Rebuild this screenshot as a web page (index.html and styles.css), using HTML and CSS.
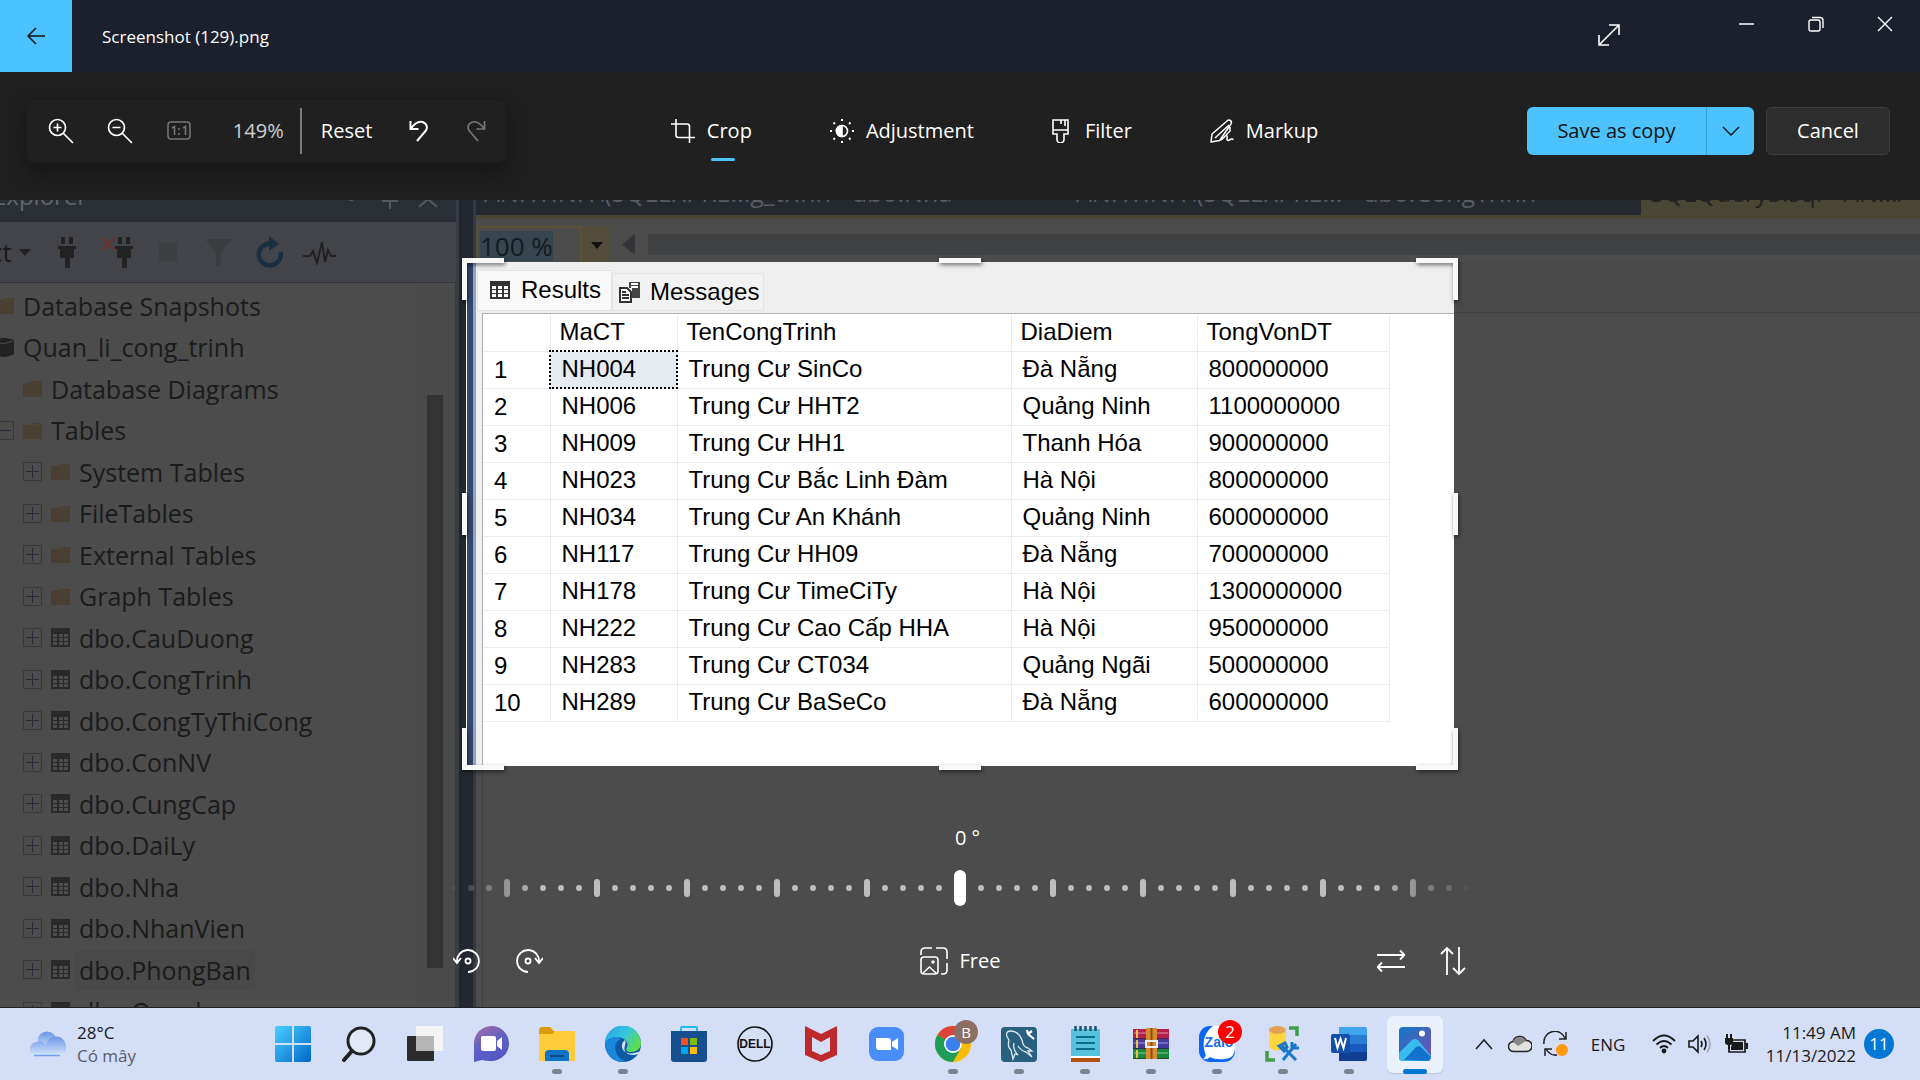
FILE: index.html
```html
<!DOCTYPE html>
<html lang="en">
<head>
<meta charset="utf-8">
<title>Screenshot (129).png</title>
<link rel="stylesheet" href="styles.css">
</head>
<body>
<svg class="defs" aria-hidden="true">
  <symbol id="folder" viewBox="0 0 19 17"><path d="M0 3h6l2-2h11v16H0z" fill="#4a3f33"/><path d="M8 3h10" stroke="#55493c"/></symbol>
  <symbol id="grid" viewBox="0 0 19 19"><path d="M0 0h19v19H0z" fill="#2a2a2a"/><path d="M2 6h4v3H2zM8 6h4v3H8zM13 6h4v3h-4zM2 10h4v3H2zM8 10h4v3H8zM13 10h4v3h-4zM2 14h4v3H2zM8 14h4v3H8zM13 14h4v3h-4z" fill="#4c4c4c"/></symbol>
  <symbol id="plus" viewBox="0 0 19 19"><path d="M.5.5h18v18H.5z" fill="none" stroke="#383838"/><path d="M3 9.500h13M9.500 3v13" stroke="#262b3c"/></symbol>
  <symbol id="minus" viewBox="0 0 19 19"><path d="M.5.5h18v18H.5z" fill="none" stroke="#383838"/><path d="M3 9.500h13" stroke="#262b3c"/></symbol>
  <symbol id="plug" viewBox="0 0 18 31"><path d="M3 0h4v7H3zM11 0h4v7h-4zM0 9h18v3h-2v9h-4v10H7V21H2v-9H0z" fill="#232323"/></symbol>
</svg>

<header class="titlebar">
  <button class="back" aria-label="Back"><svg width="20" height="20" viewBox="0 0 20 20" fill="none" stroke="#111" stroke-width="1.500"><path d="M19 10H2M10 2l-8 8 8 8"/></svg></button>
  <h1 class="title">Screenshot (129).png</h1>
  <button class="expand" aria-label="Full screen"><svg width="24" height="24" viewBox="0 0 24 24" fill="none" stroke="#fff" stroke-width="1.600"><path d="M12 2h10v10M22 2L2 22M2 12v10h10"/></svg></button>
  <div class="caption">
    <button aria-label="Minimize"><svg width="16" height="16" viewBox="0 0 16 16" stroke="#fff"><path d="M0 8h15" stroke-width="1.500"/></svg></button>
    <button aria-label="Restore"><svg width="16" height="16" viewBox="0 0 16 16" fill="none" stroke="#fff" stroke-width="1.400"><rect x="1" y="4" width="11" height="11" rx="2"/><path d="M4 1.500h8a3 3 0 0 1 3 3V12"/></svg></button>
    <button aria-label="Close"><svg width="16" height="16" viewBox="0 0 16 16" stroke="#fff" stroke-width="1.400"><path d="M1 1l14 14M15 1L1 15"/></svg></button>
  </div>
</header>

<div class="toolbar">
  <div class="zoombar">
    <button class="tool" aria-label="Zoom in"><svg width="26" height="26" viewBox="0 0 26 26" fill="none" stroke="#fff" stroke-width="1.700"><circle cx="9.500" cy="9.500" r="8"/><path d="M15 15l10 10M9.500 5.500v8M5.500 9.500h8"/></svg></button>
    <button class="tool" aria-label="Zoom out"><svg width="26" height="26" viewBox="0 0 26 26" fill="none" stroke="#fff" stroke-width="1.700"><circle cx="9.500" cy="9.500" r="8"/><path d="M15 15l10 10M5.500 9.500h8"/></svg></button>
    <button class="tool" aria-label="Actual size" disabled><svg width="24" height="20" viewBox="0 0 24 20" fill="none" stroke="#777" stroke-width="1.500"><rect x="1" y="1" width="22" height="17" rx="3"/><path d="M5 7l2.500-1.500V14M16 7l2.500-1.500V14M12 7v2M12 12v2"/></svg></button>
    <output class="zoomlevel">149%</output>
    <button class="reset">Reset</button>
    <button class="tool narrow" aria-label="Undo"><svg width="20" height="22" viewBox="0 0 20 22" fill="none" stroke="#fff" stroke-width="2"><path d="M1.500 1v8h8M2 8.500C6 3 10 1 13.500 2c4.500 1.300 5.500 6 3 9L8 21"/></svg></button>
    <button class="tool" aria-label="Redo" disabled><svg width="20" height="22" viewBox="0 0 20 22" fill="none" stroke="#777" stroke-width="1.700"><path d="M18.500 1v8h-8M18 8.500C14 3 10 1 6.500 2 2 3.300 1 8 3.500 11L12 21"/></svg></button>
  </div>
  <nav class="modes">
    <button class="mode active"><svg width="24" height="24" viewBox="0 0 24 24" fill="none" stroke="#fff" stroke-width="1.600"><path d="M5 0v16q0 2.500 2.500 2.500H24M0 5h16q2.500 0 2.500 2.500V24"/></svg>Crop</button>
    <button class="mode"><svg width="24" height="24" viewBox="0 0 24 24" fill="none" stroke="#fff" stroke-width="1.700"><circle cx="12" cy="12" r="5.500"/><path d="M12 6.500a5.500 5.500 0 0 0 0 11z" fill="#fff"/><path d="M12 0v2M12 22v2M0 12h2M22 12h2M3.500 3.500L5 5M19 19l1.500 1.500M3.500 20.500L5 19M19 5l1.500-1.500" stroke-width="2"/></svg>Adjustment</button>
    <button class="mode filter"><svg width="17" height="24" viewBox="0 0 17 24" fill="none" stroke="#fff" stroke-width="1.600"><path d="M1 1h15v14h-4v5.500a3.500 3.500 0 0 1-7 0V15H1zM1 11h15M9 1v4M13 1v6"/></svg>Filter</button>
    <button class="mode"><svg width="24" height="24" viewBox="0 0 24 24" fill="none" stroke="#fff" stroke-width="1.500" stroke-linejoin="round"><path d="M2 15L16.500 2.500C19-.5 22.500 2 21 5L9.500 21.500 1 23zM5 19L19 6M20 8v4l-4 4M9.500 21.500c4-.5 5-5.500 7-5s-1 5 1.500 5 2-3 5.500-1"/></svg>Markup</button>
  </nav>
  <div class="actions">
    <div class="split">
      <button class="save">Save as copy</button>
      <button class="more" aria-label="More save options"><svg width="18" height="12" viewBox="0 0 18 12" fill="none" stroke="#111" stroke-width="1.400"><path d="M1 2l8 8 8-8"/></svg></button>
    </div>
    <button class="cancel">Cancel</button>
  </div>
</div>

<main class="canvas">
  <div class="picture">
    <aside class="explorer">
      <div class="explorer-title"><span>Explorer</span>
        <svg width="96" height="10" viewBox="0 0 96 10" fill="none" stroke="#555a60" stroke-width="2"><path d="M4 0h4M37 1h16M45 1v8M74 7l9-8 9 8"/></svg>
      </div>
      <div class="explorer-tools">
        <span class="ct">ct</span>
        <svg class="caret" width="12" height="7" viewBox="0 0 12 7"><path d="M0 0h12L6 7z" fill="#222"/></svg>
        <svg class="plug" width="18" height="31"><use href="#plug"/></svg>
        <svg class="unplug" width="32" height="31" viewBox="0 0 32 31"><use href="#plug" x="14" width="18" height="31"/><path d="M1 1l12 12M13 1L1 13" stroke="#6a3228" stroke-width="2"/></svg>
        <svg class="stop" width="18" height="18"><path d="M0 0h18v18H0z" fill="#3d3e41"/></svg>
        <svg class="funnel" width="27" height="27" viewBox="0 0 27 27"><path d="M0 0h27L16 13v14h-5V13z" fill="#3b3c3f"/></svg>
        <svg class="refresh" width="27" height="32" viewBox="0 0 27 32"><path d="M16 7.500h-3A11 11 0 1 0 24.500 16" fill="none" stroke="#1b2f42" stroke-width="4.500"/><path d="M13 0l10 8-10 7z" fill="#1b2f42"/></svg>
        <svg class="pulse" width="33" height="25" viewBox="0 0 33 25" fill="none" stroke="#222" stroke-width="2"><path d="M0 16h7l3-5 4 12 5-21 3 20 3-12 3 6h5"/></svg>
      </div>
      <div class="explorer-body">
        <ul class="tree">
          <li class="l1"><i></i><svg class="ic"><use href="#folder"/></svg>Database Snapshots</li>
          <li class="l1"><i></i><svg class="ic" viewBox="0 0 19 19"><path d="M0 2q9-4 19 0v14q-9 6-19 0z" fill="#222"/><path d="M1 5q9 2 17-2" stroke="#4c4c4c" fill="none"/></svg>Quan_li_cong_trinh</li>
          <li class="l2"><i></i><svg class="ic"><use href="#folder"/></svg>Database Diagrams</li>
          <li class="l2"><svg class="ex"><use href="#minus"/></svg><svg class="ic"><use href="#folder"/></svg>Tables</li>
          <li><svg class="ex"><use href="#plus"/></svg><svg class="ic"><use href="#folder"/></svg>System Tables</li>
          <li><svg class="ex"><use href="#plus"/></svg><svg class="ic"><use href="#folder"/></svg>FileTables</li>
          <li><svg class="ex"><use href="#plus"/></svg><svg class="ic"><use href="#folder"/></svg>External Tables</li>
          <li><svg class="ex"><use href="#plus"/></svg><svg class="ic"><use href="#folder"/></svg>Graph Tables</li>
          <li><svg class="ex"><use href="#plus"/></svg><svg class="ic"><use href="#grid"/></svg>dbo.CauDuong</li>
          <li><svg class="ex"><use href="#plus"/></svg><svg class="ic"><use href="#grid"/></svg>dbo.CongTrinh</li>
          <li><svg class="ex"><use href="#plus"/></svg><svg class="ic"><use href="#grid"/></svg>dbo.CongTyThiCong</li>
          <li><svg class="ex"><use href="#plus"/></svg><svg class="ic"><use href="#grid"/></svg>dbo.ConNV</li>
          <li><svg class="ex"><use href="#plus"/></svg><svg class="ic"><use href="#grid"/></svg>dbo.CungCap</li>
          <li><svg class="ex"><use href="#plus"/></svg><svg class="ic"><use href="#grid"/></svg>dbo.DaiLy</li>
          <li><svg class="ex"><use href="#plus"/></svg><svg class="ic"><use href="#grid"/></svg>dbo.Nha</li>
          <li><svg class="ex"><use href="#plus"/></svg><svg class="ic"><use href="#grid"/></svg>dbo.NhanVien</li>
          <li><svg class="ex"><use href="#plus"/></svg><svg class="ic"><use href="#grid"/></svg><span class="hot">dbo.PhongBan</span></li>
          <li><svg class="ex"><use href="#plus"/></svg><svg class="ic"><use href="#grid"/></svg>dbo.Quanly</li>
        </ul>
        <div class="scroll"><div class="thumb"></div></div>
      </div>
    </aside>
    <div class="gutter"></div>
    <section class="editor">
      <div class="doc-tabs">
        <span class="doc first">ANHTINH\(SQLEXPRE...g_trinh - dbo.Nha</span>
        <span class="doc">ANHTINH\(SQLEXPRE... - dbo.CongTrinh</span>
        <span class="doc current">SQLQuery3.sql - AN.../</span>
      </div>
      <div class="zoomrow">
        <div class="combo"><span>100 %</span></div>
        <div class="combo-arrow"><svg width="12" height="7" viewBox="0 0 12 7"><path d="M0 0h12L6 7z" fill="#111"/></svg></div>
        <svg class="left" width="13" height="21" viewBox="0 0 13 21"><path d="M13 0v21L0 10.500z" fill="#333438"/></svg>
        <div class="track"></div>
      </div>
      <div class="editor-body"></div>
    </section>
  </div>

  <div class="overlay">
    <div class="crop">
      <div class="sheet">
        <div class="result-tabs">
          <button class="rtab on"><svg width="20" height="18" viewBox="0 0 20 18"><path d="M0 0h20v18H0z" fill="#333"/><path d="M2 5h4v3H2zM8 5h4v3H8zM14 5h4v3h-4zM2 9h4v3H2zM8 9h4v3H8zM14 9h4v3h-4zM2 13h4v3H2zM8 13h4v3H8zM14 13h4v3h-4z" fill="#fff"/></svg>Results</button>
          <button class="rtab"><svg width="21" height="21" viewBox="0 0 21 21"><path d="M10 0h11v16h-8V6h-3z" fill="#444"/><path d="M12 2h7M12 5h7" stroke="#fff" stroke-width="2"/><path d="M1 6h7l4 4v10H1z" fill="#fff" stroke="#333" stroke-width="2"/><path d="M3 10h4M3 13h7M3 16h7" stroke="#333" stroke-width="2"/></svg>Messages</button>
        </div>
        <div class="grid-wrap">
          <table class="results">
            <colgroup><col class="c0"><col class="c1"><col class="c2"><col class="c3"><col class="c4"></colgroup>
            <thead><tr><th></th><th>MaCT</th><th>TenCongTrinh</th><th>DiaDiem</th><th>TongVonDT</th></tr></thead>
            <tbody>
              <tr><th>1</th><td class="sel">NH004</td><td>Trung Cư SinCo</td><td>Đà Nẵng</td><td>800000000</td></tr>
              <tr><th>2</th><td>NH006</td><td>Trung Cư HHT2</td><td>Quảng Ninh</td><td>1100000000</td></tr>
              <tr><th>3</th><td>NH009</td><td>Trung Cư HH1</td><td>Thanh Hóa</td><td>900000000</td></tr>
              <tr><th>4</th><td>NH023</td><td>Trung Cư Bắc Linh Đàm</td><td>Hà Nội</td><td>800000000</td></tr>
              <tr><th>5</th><td>NH034</td><td>Trung Cư An Khánh</td><td>Quảng Ninh</td><td>600000000</td></tr>
              <tr><th>6</th><td>NH117</td><td>Trung Cư HH09</td><td>Đà Nẵng</td><td>700000000</td></tr>
              <tr><th>7</th><td>NH178</td><td>Trung Cư TimeCiTy</td><td>Hà Nội</td><td>1300000000</td></tr>
              <tr><th>8</th><td>NH222</td><td>Trung Cư Cao Cấp HHA</td><td>Hà Nội</td><td>950000000</td></tr>
              <tr><th>9</th><td>NH283</td><td>Trung Cư CT034</td><td>Quảng Ngãi</td><td>500000000</td></tr>
              <tr><th>10</th><td>NH289</td><td>Trung Cư BaSeCo</td><td>Đà Nẵng</td><td>600000000</td></tr>
            </tbody>
          </table>
        </div>
      </div>
      <span class="h tl"></span><span class="h tc"></span><span class="h tr"></span>
      <span class="h ml"></span><span class="h mr"></span>
      <span class="h bl"></span><span class="h bc"></span><span class="h br"></span>
    </div>

    <label class="angle" for="straighten">0 °</label>
    <div class="ruler">
      <svg class="ticks" width="1026" height="36" viewBox="-513 -18 1026 36" fill="none" stroke="#bdbdbd" stroke-width="6" stroke-linecap="round">
        <path stroke-dasharray="0 18 0 18 0 18 0 36" d="M21 0H520"/>
        <path stroke-dasharray="0 18 0 18 0 18 0 36" d="M-21 0H-520"/>
        <path d="M93-6V6M183-6V6M273-6V6M363-6V6M453-6V6M-93-6V6M-183-6V6M-273-6V6M-363-6V6M-453-6V6"/>
      </svg>
      <input id="straighten" type="range" min="-45" max="45" value="0">
    </div>
    <div class="crop-tools">
      <button class="ct-btn" aria-label="Rotate left"><svg width="28" height="26" viewBox="0 0 28 26" fill="none" stroke="#fff" stroke-width="1.800"><path d="M4 14A11 11 0 1 1 15 24M0 10l4 5 4-5"/><circle cx="15" cy="13" r="2.500"/></svg></button>
      <button class="ct-btn" aria-label="Rotate right"><svg width="28" height="26" viewBox="0 0 28 26" fill="none" stroke="#fff" stroke-width="1.800"><path d="M24 14A11 11 0 1 0 13 24M20 10l4 5 4-5"/><circle cx="13" cy="13" r="2.500"/></svg></button>
      <button class="free"><svg width="28" height="28" viewBox="0 0 28 28" fill="none" stroke="#fff" stroke-width="1.600"><path d="M1 8V5q0-4 4-4h7M16 1h7q4 0 4 4v7M27 16v7q0 4-4 4h-2"/><rect x="1" y="10" width="17" height="17" rx="3"/><path d="M3 26l6.500-6 6.500 6"/><circle cx="13" cy="15" r="1"/></svg>Free</button>
      <button class="ct-btn" aria-label="Flip horizontally"><svg width="28" height="26" viewBox="0 0 28 26" fill="none" stroke="#fff" stroke-width="1.800"><path d="M0 7h27M23 2.500L27.500 7 23 11.500M28 19H1M5 14.500L.500 19 5 23.500"/></svg></button>
      <button class="ct-btn" aria-label="Flip vertically"><svg width="26" height="28" viewBox="0 0 26 28" fill="none" stroke="#fff" stroke-width="1.800"><path d="M7 28V1M1 7l6-6 6 6M19 0v27M13 21l6 6 6-6"/></svg></button>
    </div>
  </div>
</main>

<footer class="taskbar">
  <button class="weather">
    <svg width="38" height="26" viewBox="0 0 38 26"><defs><linearGradient id="cl" x2="0" y2="1"><stop stop-color="#6a94e6"/><stop offset="1" stop-color="#d5e8fb"/></linearGradient></defs><circle cx="18" cy="10" r="9.500" fill="url(#cl)"/><path d="M8 11a7 7 0 0 1 9 3 9 9 0 0 1 20 3c0 5-3 8-7 8H8a7 7 0 0 1 0-14z" fill="url(#cl)"/><path d="M5 24.500h26" stroke="#6fa0e8" stroke-width="1.500"/></svg>
    <span class="wtext"><span>28°C</span><span class="sub">Có mây</span></span>
  </button>
  <div class="apps">
    <button class="app" aria-label="Start"><svg viewBox="0 0 36 36"><defs><linearGradient id="w" x2="1" y2="1"><stop stop-color="#4ad0ff"/><stop offset="1" stop-color="#0067c8"/></linearGradient></defs><path d="M2 0h15v17H0V2q0-2 2-2zM19 0h15q2 0 2 2v15H19zM0 19h17v17H2q-2 0-2-2zM19 19h17v15q0 2-2 2H19z" fill="url(#w)"/></svg></button>
    <button class="app" aria-label="Search"><svg viewBox="0 0 36 36" fill="none" stroke="#222"><circle cx="20" cy="15" r="13" stroke-width="3" fill="#e2e8f6"/><path d="M11 25l-8 9" stroke-width="4" stroke-linecap="round"/></svg></button>
    <button class="app" aria-label="Task view"><svg viewBox="0 0 36 36"><rect y="10" width="27" height="25" rx="1" fill="#2b2b2b"/><rect x="9" width="27" height="25" rx="1" fill="#f4f4f4"/><path d="M9 10h18v15H9z" fill="#b5b5b5"/></svg></button>
    <button class="app" aria-label="Chat"><svg viewBox="0 0 36 36"><defs><linearGradient id="ch" x1="0" y1="0" x2=".5" y2="1"><stop stop-color="#a86ba0"/><stop offset=".6" stop-color="#5b5fc7"/><stop offset="1" stop-color="#5558c4"/></linearGradient></defs><path d="M1 36V18A17.500 17.500 0 1 1 18 35q-5 0-9-1z" fill="url(#ch)"/><rect x="8" y="10" width="15" height="15" rx="2" fill="#fff"/><path d="M24 15l5-4v13l-5-4z" fill="#fff"/></svg></button>
    <button class="app run" aria-label="File Explorer"><svg viewBox="0 0 36 36"><path d="M0 4q0-3 3-3h8l4 4h5v7H0z" fill="#dd9b06"/><path d="M0 8h13l3-3h18q2 0 2 2v28H0z" fill="#ffcd3b"/><path d="M6 35v-7q0-4 4-4h16q4 0 4 4v7z" fill="#1073c6"/><path d="M11 30h14" stroke="#0a4b88" stroke-width="2"/></svg></button>
    <button class="app run" aria-label="Edge"><svg viewBox="0 0 36 36"><defs><linearGradient id="eg" x2="1" y2=".6"><stop stop-color="#2aa0e8"/><stop offset=".55" stop-color="#36c5dc"/><stop offset="1" stop-color="#5ee04a"/></linearGradient></defs><circle cx="18" cy="18" r="18" fill="#0c59a4"/><path d="M0 18A18 18 0 0 1 36 17c0 6-5 9-10 9-4 0-6-2-4-5 3-7-8-13-15-8q-6 2-7 5z" fill="url(#eg)"/><path d="M0 17c3-6 11-8 16-4-5 2-7 7-5 13 1 4 5 8 10 9.500Q2 38 0 17z" fill="#1a86dc"/><path d="M20 14c-4 3-4 8-1 11 3 3 9 3 14 1l4-1-1 3-3 0c-5 2-11 1-13-3-2-4 2-7 0-11z" fill="#d5def7"/></svg></button>
    <button class="app" aria-label="Microsoft Store"><svg viewBox="0 0 36 36"><path d="M10 7V2q0-1 1-1h14q1 0 1 1v5" fill="none" stroke="#22b8f0" stroke-width="2"/><path d="M0 5h36v28q0 3-3 3H3q-3 0-3-3z" fill="#174f8e"/><path d="M10 12h7v7h-7z" fill="#f25022"/><path d="M19 12h7v7h-7z" fill="#7fba00"/><path d="M10 21h7v7h-7z" fill="#00a4ef"/><path d="M19 21h7v7h-7z" fill="#ffb900"/></svg></button>
    <button class="app" aria-label="Dell"><svg viewBox="0 0 36 36"><circle cx="18" cy="18" r="17" fill="none" stroke="#111" stroke-width="1.600"/><text x="18" y="22" class="dell">DELL</text></svg></button>
    <button class="app" aria-label="McAfee"><svg viewBox="0 0 36 36"><path d="M2 0l16 8 16-8v29l-16 7-16-7z" fill="#c0292b"/><path d="M9 11l9 5 9-5v14l-9 4-9-4z" fill="#d5def7"/></svg></button>
    <button class="app" aria-label="Zoom"><svg viewBox="0 0 36 36"><rect y="1" width="35" height="34" rx="9" fill="#4a8cf8"/><path d="M7 12h12q3 0 3 3v9H10q-3 0-3-3zM23 16l6-4v12l-6-4z" fill="#fff"/></svg></button>
    <button class="app run" aria-label="Chrome"><svg viewBox="0 0 36 36"><circle cx="18" cy="18" r="18" fill="#fbbc05"/><path d="M18 18L2.400 9A18 18 0 0 1 33.600 9z" fill="#dc4437"/><path d="M18 9h15.600L18 4z" fill="#dc4437"/><path d="M18 18L2.400 9A18 18 0 0 0 18 36l8-14z" fill="#1f9d58"/><circle cx="18" cy="18" r="9" fill="#fff"/><circle cx="18" cy="18" r="7.300" fill="#3c80ee"/></svg><span class="badge brown">B</span></button>
    <button class="app run" aria-label="MySQL Workbench"><svg viewBox="0 0 36 36"><rect y="1" width="36" height="35" rx="4" fill="#2a607f"/><path d="M8 14C4 9 5 5 10 5c6 0 9 4 11 9 1 5 2 7 6 8l4 3-4 0 4 6-6-5c-4-1-6-3-8-6M8 14c-1 4-1 8 2 10l2 9 2-5 3 1c-4-4-5-8-4-12" fill="none" stroke="#dbe8ee" stroke-width="1.300"/><path d="M26 4l1 4 6 5M27 8l4-3" stroke="#fff" stroke-width="2.200" fill="none"/></svg></button>
    <button class="app run" aria-label="Notepad"><svg viewBox="0 0 36 36"><path d="M4 32h29v4H4z" fill="#b6500f"/><path d="M4 29h29v3H4z" fill="#fff"/><path d="M4 3h29v27H4z" fill="#56c2dc"/><path d="M9 11h19M9 17h19M9 23h19" stroke="#0d6a8c" stroke-width="1.800"/><path d="M8.500 0v5M13.500 0v5M18.500 0v5M23.500 0v5M28.500 0v5" stroke="#18536b" stroke-width="2.500"/></svg></button>
    <button class="app run" aria-label="WinRAR"><svg viewBox="0 0 36 36"><path d="M0 3h36v10H0z" fill="#b51f4e"/><path d="M0 13h36v10H0z" fill="#463aa0"/><path d="M0 23h36v10H0z" fill="#158a38"/><path d="M1 7h34M1 17h34M1 27h34" stroke="#fff" stroke-opacity=".25" stroke-width="2"/><path d="M0 12.500h36M0 22.500h36M0 32.500h36" stroke="#222" stroke-opacity=".6"/><path d="M4 4v8M4 14v8M4 24v8" stroke="#e8c34a" stroke-width="2"/><path d="M13 2h11v31H13z" fill="#d98a2c"/><path d="M18.500 2v31" stroke="#8b4a12" stroke-width="2"/><path d="M13 15h11v6H13z" fill="none" stroke="#eee" stroke-width="2"/></svg></button>
    <button class="app run" aria-label="Zalo"><svg viewBox="0 0 36 36"><rect width="36" height="36" rx="11" fill="#0a68f5"/><path d="M14 0h11q11 0 11 11v11q0 10-10 11-10 1-15-2-3 3-7 2 4-3 2-6Q1 10 14 0z" fill="#fff"/><text x="20" y="21" class="zalo">Zalo</text></svg><span class="badge red">2</span></button>
    <button class="app run" aria-label="SQL Server Management Studio"><svg viewBox="0 0 36 36"><path d="M4 4v18q8 5 17 0V4z" fill="#ffd640"/><ellipse cx="12.500" cy="4" rx="8.500" ry="4" fill="#e5a154"/><path d="M24 2h8v8M2 25v9h8" fill="none" stroke="#3f9f48" stroke-width="3.500"/><path d="M17 20l14 14M31 18L18 34" stroke="#1877c9" stroke-width="3"/><path d="M14 20l6-3 2 4-3 4zM27 16v6h7" fill="none" stroke="#1877c9" stroke-width="3"/></svg></button>
    <button class="app run" aria-label="Word"><svg viewBox="0 0 36 36"><path d="M8 1h26q2 0 2 2v7H8z" fill="#41a5ee"/><path d="M8 9h28v9H8z" fill="#2b7cd3"/><path d="M8 18h28v8H8z" fill="#185abd"/><path d="M8 26h28v7q0 2-2 2H8z" fill="#103f91"/><rect y="8" width="19" height="19" rx="2" fill="#144fab"/><path d="M4 12l2.500 10L9.500 13l3 9L15 12" fill="none" stroke="#fff" stroke-width="2"/></svg></button>
    <button class="app photos" aria-label="Photos"><svg viewBox="0 0 36 36"><defs><linearGradient id="ph" x2="1" y2="1"><stop stop-color="#0f78c8"/><stop offset="1" stop-color="#7a4fb0"/></linearGradient></defs><rect x="2" y="1" width="32" height="34" rx="4" fill="url(#ph)"/><path d="M2 27l13-13q3-2 6 0l13 16v2q-1 3-4 3H6q-4 0-4-4z" fill="#38bdee"/><path d="M7 34l12-13q3-2 5 0l10 10-2 4z" fill="#1272cc"/><circle cx="25" cy="7.500" r="3" fill="#fff"/></svg></button>
  </div>
  <div class="tray">
    <button aria-label="Show hidden icons"><svg width="18" height="12" viewBox="0 0 18 12" fill="none" stroke="#222" stroke-width="1.600"><path d="M1 11l8-9 8 9"/></svg></button>
    <button aria-label="OneDrive"><svg width="24" height="18" viewBox="0 0 24 18"><path d="M6 16.500a5 5 0 0 1-1-10 7 7 0 0 1 13-1 5.500 5.500 0 0 1 1 11z" fill="#e2e2e2" stroke="#222" stroke-width="1.500"/><path d="M5 7a7 7 0 0 1 13-1l-8 5z" fill="#888"/></svg></button>
    <button aria-label="Updates"><svg width="26" height="26" viewBox="0 0 26 26" fill="none" stroke="#222" stroke-width="1.500"><path d="M1 13A11 11 0 0 1 22 7M23 1v7h-7M14 24q-7 1-11-6M2 25v-7h7"/><circle cx="19" cy="19" r="6" fill="#ff9a0c" stroke="none"/></svg></button>
    <button class="lang">ENG</button>
    <button aria-label="Network, volume and battery" class="status">
      <svg width="24" height="20" viewBox="0 0 24 20" fill="none" stroke="#1a1a1a" stroke-width="1.800"><path d="M1 7q11-11 22 0M4.500 10.500q7.500-7 15 0M8 14q4-4 8 0"/><circle cx="12" cy="17" r="1.500" fill="#1a1a1a"/></svg>
      <svg width="24" height="20" viewBox="0 0 24 20" fill="none" stroke="#1a1a1a" stroke-width="1.600"><path d="M1 7h4l5-5v16l-5-5H1zM13 7q2 3 0 6M16 4q4 6 0 12"/><path d="M19 1.500q6 8.500 0 17" stroke="#9aa3b8"/></svg>
      <svg width="24" height="20" viewBox="0 0 24 20"><path d="M9 6h12v12H5v-4" fill="none" stroke="#1a1a1a" stroke-width="1.700"/><path d="M9 8h10v8H7v-3zM22 9h2v6h-2zM1 4h8v4q0 3-3 3v4H4v-4q-3 0-3-3zM2 0h2v4H2zM6 0h2v4H6z" fill="#1a1a1a"/></svg>
    </button>
    <button class="clock"><span>11:49 AM</span><span>11/13/2022</span></button>
    <span class="count">11</span>
  </div>
</footer>
</body>
</html>
```
FILE: styles.css
```css
* { box-sizing: border-box; }
html, body { height: 100%; }
body {
  margin: 0;
  display: flex;
  flex-direction: column;
  overflow: hidden;
  background: #202020;
  color: #fff;
  font: 20px/28px "Open Sans", "Noto Sans", sans-serif;
}
button {
  border: 0;
  padding: 0;
  margin: 0;
  background: none;
  color: inherit;
  font: inherit;
  display: flex;
  align-items: center;
  justify-content: center;
}
svg { display: block; flex: none; }
.defs { position: absolute; width: 0; height: 0; }

/* Title bar */
.titlebar { display: flex; align-items: flex-start; height: 72px; flex: none; background: #1b202c; }
.back { width: 72px; height: 72px; background: #4cc2ff; }
.title { margin: 0 auto 0 30px; font-size: 17px; font-weight: 400; line-height: 73px; }
.expand { width: 72px; height: 70px; margin-right: 67px; }
.caption { display: flex; margin-right: 1px; }
.caption button { width: 69px; height: 48px; }

/* Edit toolbar */
.toolbar { display: flex; align-items: center; height: 128px; flex: none; padding: 0 30px 10px 25px; background: #202020; }
.zoombar {
  display: flex; align-items: center; width: 483px; height: 66px; padding-left: 4px;
  border: 2px solid #1c1c1c; border-radius: 9px; box-shadow: 0 9px 18px #171717;
}
.tool { width: 60px; height: 48px; }
.tool.narrow { width: 56px; }
.zoomlevel { width: 94px; height: 46px; line-height: 46px; padding-right: 16px; text-align: right; color: #cfcfcf; border-right: 2px solid #7c7c7c; }
.reset { width: 91px; }
.modes { flex: 1; display: flex; justify-content: center; gap: 78px; padding-right: 46px; }
.mode { gap: 12px; height: 60px; position: relative; }
.mode.filter { gap: 16px; }
.mode.active::after { content: ""; position: absolute; bottom: 0; left: 50%; width: 24px; height: 3px; border-radius: 2px; background: #4cc2ff; }
.actions { display: flex; gap: 12px; }
.split { display: flex; height: 48px; border-radius: 6px; background: #4cc2ff; color: #111; overflow: hidden; }
.save { width: 180px; border-right: 1px solid #3a9fd2; }
.more { width: 47px; }
.cancel { width: 124px; height: 48px; border: 1px solid #3d3d3d; border-radius: 6px; background: #2d2d2d; }

/* Dimmed picture behind the crop frame */
.canvas { flex: 1; min-height: 0; position: relative; overflow: hidden; background: #4c4c4c; }
.picture { display: flex; height: 100%; color: #1b1b1b; font-size: 26px; }
.explorer { width: 456px; flex: none; display: flex; flex-direction: column; min-height: 0; }
.explorer-title { display: flex; justify-content: space-between; height: 22px; overflow: hidden; padding-right: 15px; background: #2b2f36; color: #62666c; font-size: 24px; line-height: 24px; }
.explorer-title span { margin: -16px 0 0 -7px; }
.explorer-tools { display: flex; align-items: center; height: 61px; flex: none; background: #434449; border-bottom: 1px solid #35363a; }
.ct { margin-left: -10px; font-size: 26px; width: 22px; }
.caret { margin-left: 7px; }
.plug { margin-left: 27px; }
.unplug { margin-left: 25px; }
.stop { margin-left: 26px; }
.funnel { margin-left: 28px; }
.refresh { margin-left: 24px; }
.pulse { margin-left: 20px; }
.explorer-body { flex: 1; min-height: 0; display: flex; overflow: hidden; border-right: 1px solid #3a3a3a; }
.tree { flex: 1; margin: 2px 0 0; padding: 0; height: 747px; flex-shrink: 0; display: grid; grid-auto-rows: 1fr; list-style: none; font-size: 25px; line-height: 40px; }
.tree li { display: flex; align-items: center; padding-left: 23px; white-space: nowrap; }
.tree .l1 { margin-left: -56px; }
.tree .l2 { margin-left: -28px; }
.tree i, .ex, .ic { width: 19px; height: 19px; flex: none; margin-right: 9px; }
.hot { background: #494949; margin-left: -4px; padding: 0 4px; }
.scroll { width: 39px; padding: 112px 12px 0 11px; background: #4a4a4a; }
.thumb { height: 573px; background: #333; }
.gutter { width: 20px; flex: none; background: #23272f; border-left: 3px solid #3a3d45; border-right: 3px solid #343842; }
.editor { flex: 1; min-width: 0; display: flex; flex-direction: column; }
.doc-tabs { display: flex; height: 19px; flex: none; overflow: hidden; background: #24282f; border-bottom: 4px solid #4a4636; color: #5a5c60; font-size: 25px; line-height: 24px; white-space: nowrap; }
.doc { width: 565px; margin-top: -20px; padding-top: 0; }
.doc.first { width: 600px; padding-left: 8px; }
.doc.current { flex: 1; height: 40px; background: #4a4636; color: #222; padding-left: 9px; overflow: hidden; }
.zoomrow { display: flex; align-items: flex-start; height: 43px; flex: none; padding-top: 7px; }
.combo { width: 106px; height: 36px; padding: 3px 0 0 2px; border: 2px solid #5c5134; border-bottom: 0; }
.combo span { display: block; width: 73px; background: #37454f; color: #141a20; line-height: 30px; font-size: 26px; }
.combo-arrow { width: 27px; height: 36px; padding: 16px 0 0 9px; background: #544d3b; }
.left { margin: 8px 0 0 13px; }
.track { flex: 1; height: 21px; margin: 8px 0 0 13px; background: #3f4143; }
.editor-body { flex: 1; margin-left: 6px; border-left: 1px solid #404040; background: linear-gradient(#4a4a4a 50px, #404040 50px 51px, #4c4c4c 51px); }

/* Crop frame and controls */
.overlay { position: absolute; inset: 0; display: flex; flex-direction: column; align-items: center; padding-top: 62px; }
.crop { position: relative; width: 988px; height: 504px; flex: none; }
.sheet {
  height: 100%; display: flex; flex-direction: column; padding-left: 11px;
  background: linear-gradient(90deg, #fff 0 1px, #33496b 1px 7px, #95a2c8 7px 10px, #efefef 10px);
  color: #000; font-family: "Liberation Sans", Arial, sans-serif; font-size: 24px; line-height: 36px;
}
.result-tabs { display: flex; align-items: flex-end; height: 49px; flex: none; }
.rtab { height: 38px; padding: 0 4px 0 6px; gap: 10px; border: 1px solid #e3e3e3; background: #f2f2f2; }
.rtab.on { height: 41px; padding: 0 10px 2px 12px; gap: 11px; background: #f9f9f9; }
.grid-wrap { flex: 1; margin: 2px 0 0 5px; background: #fff; border: 1px solid #b0b0b4; border-width: 1px 0 0 1px; }
.results { border-collapse: collapse; table-layout: fixed; width: 906px; }
.c0 { width: 67px; } .c1 { width: 127px; } .c2 { width: 334px; } .c3 { width: 186px; } .c4 { width: 192px; }
.results th, .results td { height: 37px; padding: 0 0 2px 11px; border: 1px solid #ececec; border-top: 0; text-align: left; font-weight: 400; line-height: 34px; white-space: nowrap; }
.results thead th { padding: 0 0 0 9px; }
.results th:first-child { border-left: 0; }
.results tbody th { padding: 0 0 0 11px; }
.results .sel { background: #e5ebf1; outline: 2px dotted #000; outline-offset: -1px; }
.h { position: absolute; border: 0 solid #f8f8f6; width: 42px; height: 42px; filter: drop-shadow(1px 2px 2px #0008); }
.tl { left: -4px; top: -4px; border-width: 5px 0 0 5px; }
.tr { right: -4px; top: -4px; border-width: 5px 5px 0 0; }
.bl { left: -4px; bottom: -4px; border-width: 0 0 5px 5px; }
.br { right: -4px; bottom: -4px; border-width: 0 5px 5px 0; }
.tc, .bc { left: calc(50% - 21px); height: 5px; border-top-width: 5px; }
.tc { top: -4px; } .bc { bottom: -4px; }
.ml, .mr { top: calc(50% - 21px); width: 5px; border-left-width: 5px; }
.ml { left: -4px; } .mr { right: -4px; }
.angle { margin: 58px 0 0 15px; }
.ruler { position: relative; margin-top: 18px; width: 1026px; height: 36px; flex: none; }
.ticks { -webkit-mask-image: linear-gradient(90deg, transparent, #000 9%, #000 91%, transparent); mask-image: linear-gradient(90deg, transparent, #000 9%, #000 91%, transparent); }
#straighten { position: absolute; inset: 0; width: 100%; height: 36px; margin: 0; appearance: none; -webkit-appearance: none; background: none; }
#straighten::-webkit-slider-thumb { -webkit-appearance: none; width: 12px; height: 36px; border-radius: 6px; background: #fff; }
#straighten::-moz-range-thumb { width: 12px; height: 36px; border: 0; border-radius: 6px; background: #fff; }
.crop-tools { display: grid; grid-template-columns: 62px 62px 1fr 62px 62px; width: 1048px; height: 48px; margin-top: 31px; }
.free { gap: 12px; }

/* Taskbar */
.taskbar { display: flex; align-items: stretch; height: 73px; flex: none; background: #d5def7; border-top: 1px solid #222; color: #1a1a1a; font-size: 17px; line-height: 23px; }
.weather { width: 260px; justify-content: flex-start; padding-left: 29px; gap: 10px; }
.wtext { display: flex; flex-direction: column; text-align: left; }
.sub { color: #555c6c; }
.apps { display: flex; }
.app { position: relative; width: 66px; }
.app svg { width: 36px; height: 36px; position: relative; }
.run::after { content: ""; position: absolute; bottom: 6px; left: 28px; width: 10px; height: 5px; border-radius: 3px; background: #7c828f; }
.photos::after { content: ""; position: absolute; bottom: 6px; left: 21px; width: 24px; height: 5px; border-radius: 3px; background: #0078d4; }
.photos::before { content: ""; position: absolute; inset: 8px 5px 7px; border-radius: 6px; background: #eaf0fc; box-shadow: 0 1px 1px #b9c3dc; }
.badge { position: absolute; top: 12px; right: 8px; width: 24px; height: 24px; border-radius: 12px; color: #fff; font-size: 15px; line-height: 24px; text-align: center; }
.brown { background: #8d6e63; }
.red { background: #f00; font-size: 17px; }
.dell { font: 700 12px "Liberation Sans", sans-serif; text-anchor: middle; fill: #111; }
.zalo { font: 700 14px "Liberation Sans", sans-serif; text-anchor: middle; fill: #1a6fe8; }
.tray { flex: 1; display: flex; align-items: center; justify-content: flex-end; padding-right: 26px; }
.tray button { width: 36px; height: 48px; }
.tray .lang { width: 68px; }
.tray .status { width: 112px; gap: 12px; padding-left: 4px; }
.tray .clock { width: 102px; flex-direction: column; align-items: flex-end; }
.count { width: 30px; height: 30px; margin-left: 8px; border-radius: 15px; background: #0078d4; color: #fff; text-align: center; line-height: 30px; }
```
